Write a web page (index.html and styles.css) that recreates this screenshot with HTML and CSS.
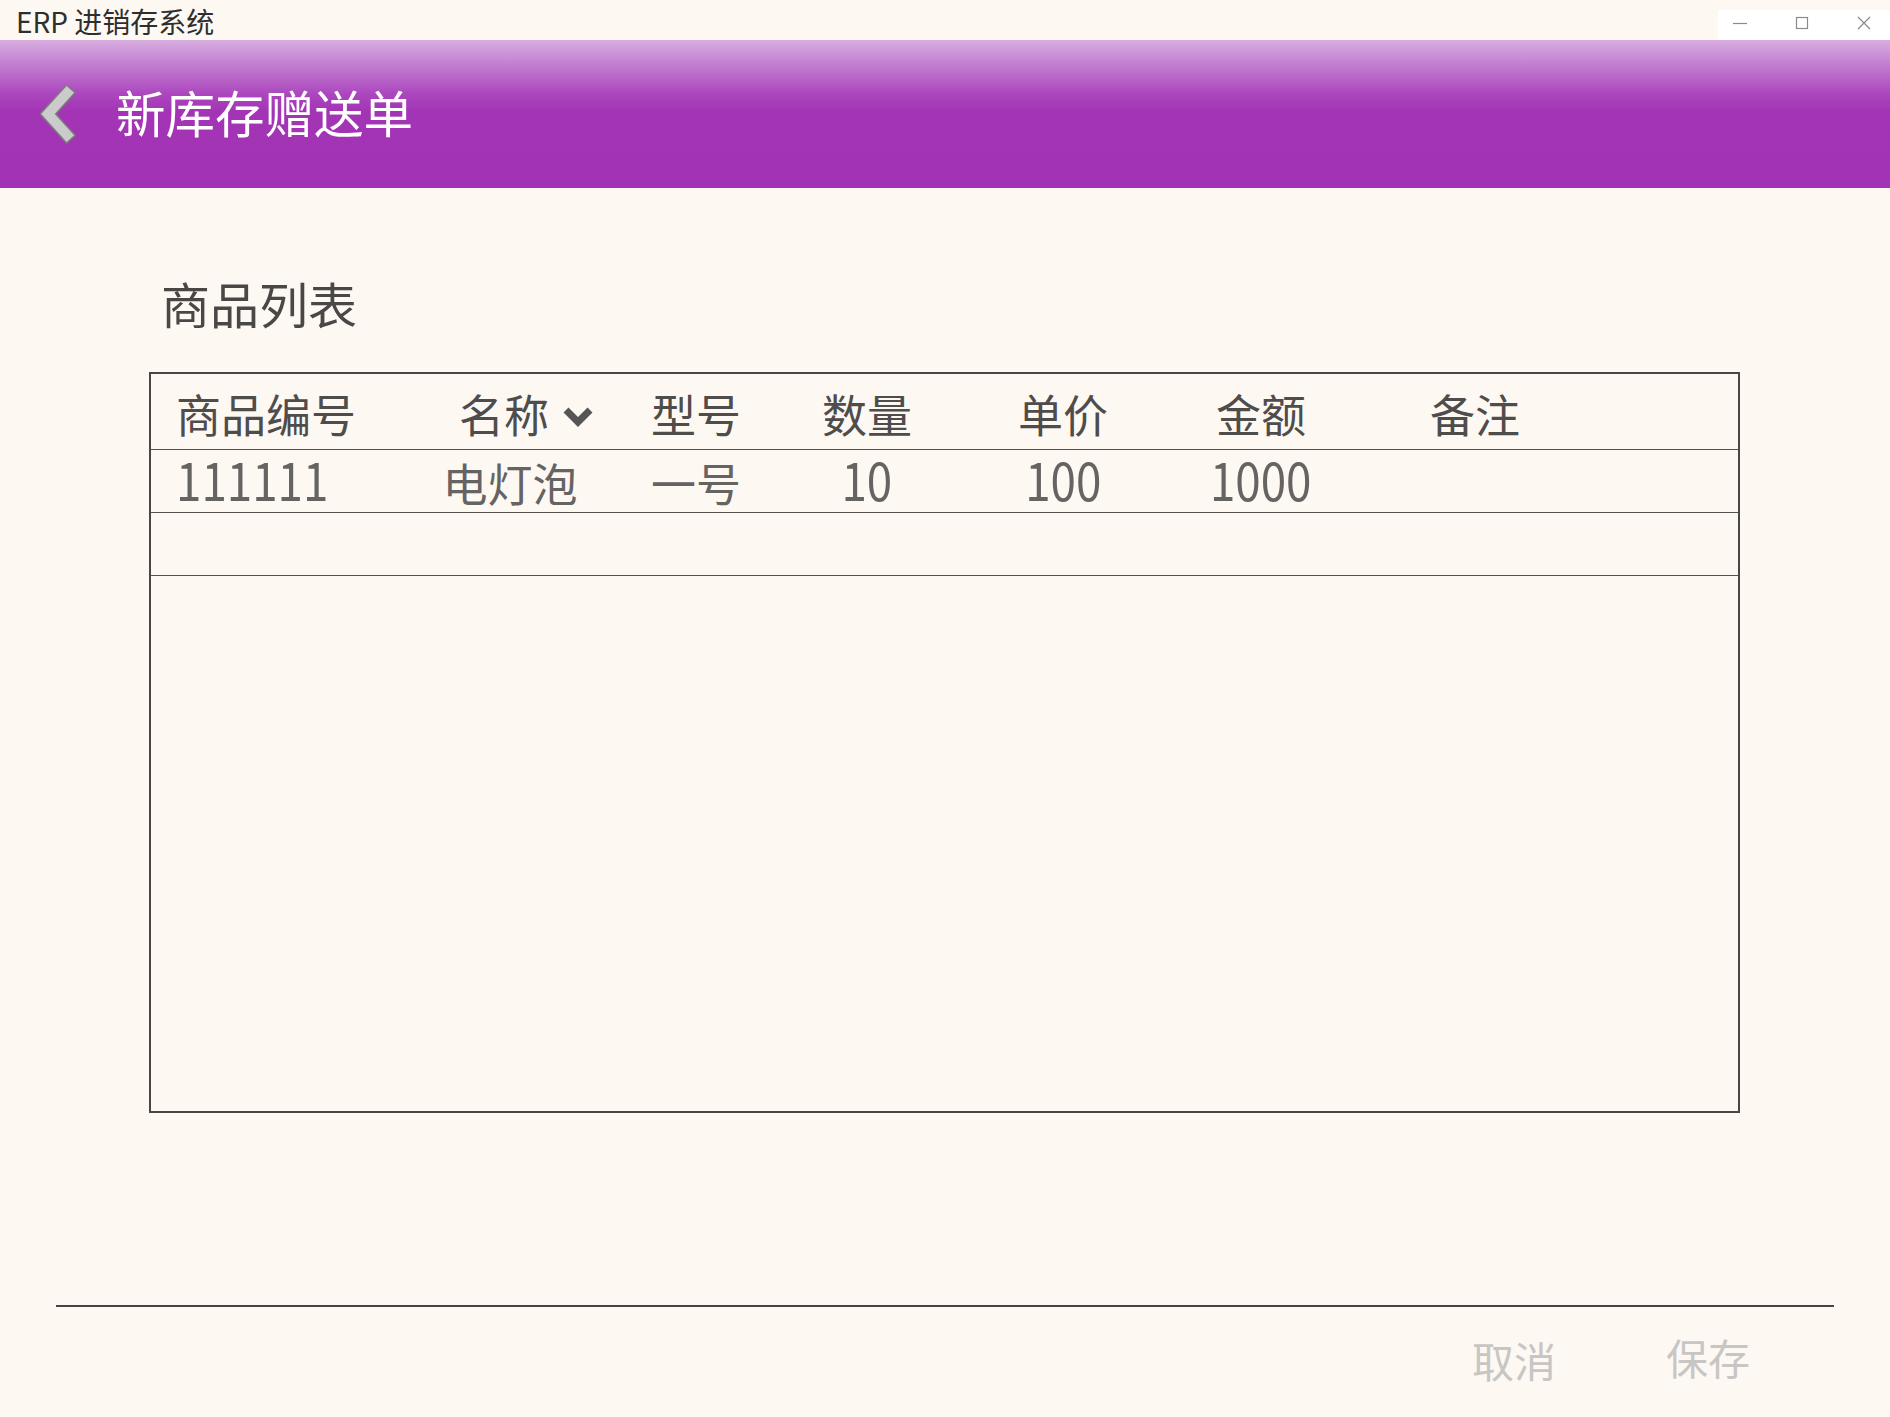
FILE: index.html
```html
<!DOCTYPE html>
<html lang="zh-CN">
<head>
<meta charset="utf-8">
<title>ERP 进销存系统</title>
<link rel="stylesheet" href="styles.css">
</head>
<body>
<div class="window">
  <div class="titlebar">
    <span class="app-title">ERP 进销存系统</span>
    <div class="win-controls">
      <svg class="wc" width="40" height="29" viewBox="0 0 40 29"><line x1="13" y1="12.5" x2="27" y2="12.5" stroke="#8a8a8a" stroke-width="1.2"/></svg>
      <svg class="wc" width="40" height="29" viewBox="0 0 40 29"><rect x="14.5" y="6.5" width="11" height="11" fill="none" stroke="#8a8a8a" stroke-width="1.2"/></svg>
      <svg class="wc" width="40" height="29" viewBox="0 0 40 29"><path d="M14 6 L26 18 M26 6 L14 18" stroke="#8a8a8a" stroke-width="1.2" fill="none"/></svg>
    </div>
  </div>

  <header class="page-header">
    <svg class="back" width="40" height="60" viewBox="0 0 40 60">
      <polyline points="31,8 12,29 31,50" fill="none" stroke="#7c7c7c" stroke-width="13" stroke-linejoin="miter" stroke-linecap="square"/>
      <polyline points="31,8 12,29 31,50" fill="none" stroke="#cbcbcb" stroke-width="10" stroke-linejoin="miter" stroke-linecap="square"/>
    </svg>
    <h1 class="page-title">新库存赠送单</h1>
  </header>

  <main class="content">
    <h2 class="section-title">商品列表</h2>
    <div class="grid-table">
      <div class="row head">
        <div class="cell first">商品编号</div>
        <div class="cell name-head">名称<svg class="sort" width="34" height="24" viewBox="0 0 34 24"><polyline points="5,5 17,17 29,5" fill="none" stroke="#555" stroke-width="7"/></svg></div>
        <div class="cell">型号</div>
        <div class="cell">数量</div>
        <div class="cell">单价</div>
        <div class="cell">金额</div>
        <div class="cell">备注</div>
        <div class="cell"></div>
      </div>
      <div class="row body">
        <div class="cell first"><span class="num left">111111</span></div>
        <div class="cell name-cell">电灯泡</div>
        <div class="cell">一号</div>
        <div class="cell"><span class="num">10</span></div>
        <div class="cell"><span class="num">100</span></div>
        <div class="cell"><span class="num">1000</span></div>
        <div class="cell"></div>
        <div class="cell"></div>
      </div>
      <div class="row body">
        <div class="cell first"></div>
        <div class="cell"></div>
        <div class="cell"></div>
        <div class="cell"></div>
        <div class="cell"></div>
        <div class="cell"></div>
        <div class="cell"></div>
        <div class="cell"></div>
      </div>
    </div>
  </main>

  <footer class="footer">
    <button class="btn cancel">取消</button>
    <button class="btn">保存</button>
  </footer>
</div>
</body>
</html>
```
FILE: styles.css
```css
* { box-sizing: border-box; }

html, body {
  margin: 0;
  padding: 0;
  background: #fdf8f2;
}

body {
  font-family: "Noto Sans CJK SC", "Noto Sans", sans-serif;
  color: #4a4a4a;
}

.window {
  width: 1890px;
  height: 1417px;
  display: flex;
  flex-direction: column;
}

.titlebar {
  height: 40px;
  display: flex;
  align-items: flex-start;
  justify-content: space-between;
  background: #fdf8f2;
}

.app-title {
  font-size: 28px;
  line-height: 40px;
  color: #2e2e2e;
  padding-left: 16px;
  margin-top: 1px;
}

.win-controls {
  margin-top: 10px;
  width: 172px;
  height: 30px;
  background: #ffffff;
  display: flex;
  align-items: center;
  gap: 22px;
  padding-left: 2px;
}

.wc { display: block; }

.page-header {
  height: 148px;
  display: flex;
  align-items: center;
  padding-left: 36px;
  background: linear-gradient(to bottom, #d8aee0 0px, #c27dd0 25px, #ab45bd 55px, #a334b5 72px, #a233b4 148px);
}

.back {
  display: block;
  margin-top: 2px;
}

.page-title {
  margin: -4px 0 0 40px;
  font-weight: normal;
  font-size: 49.5px;
  line-height: 60px;
  color: #ffffff;
}

.content {
  padding-left: 149px;
}

.section-title {
  margin: 85px 0 0 12px;
  font-weight: normal;
  font-size: 49px;
  line-height: 60px;
  color: #4a4747;
}

.grid-table {
  margin-top: 39px;
  width: 1591px;
  height: 741px;
  border: 2px solid #4a4646;
}

.row {
  display: grid;
  grid-template-columns: 279px 180px 172px 170px 222px 174px 254px 1fr;
  border-bottom: 1px solid #555151;
}

.row.head { height: 76px; }
.row.body { height: 63px; }

.cell {
  display: flex;
  align-items: center;
  justify-content: center;
  font-size: 45px;
  color: #4f4c4c;
}

.row.head .cell { padding-top: 4px; }

.row.body .cell {
  color: #666363;
  align-items: flex-start;
  line-height: 1;
  padding-top: 10px;
}

.cell.first {
  justify-content: flex-start;
  padding-left: 25px;
}

.name-head { padding-left: 14px; }
.name-cell { padding-right: 20px; }

.num {
  display: inline-block;
  font-size: 52px;
  line-height: 1;
  margin-top: -7px;
  transform: scaleX(0.88);
}

.num.left {
  transform-origin: left center;
}

.sort {
  display: block;
  margin-left: 12px;
  margin-top: 6px;
}

.footer {
  margin: 192px 56px 0 56px;
  border-top: 2px solid #4a4545;
  display: flex;
  justify-content: flex-end;
  align-items: flex-start;
  gap: 110px;
  padding-right: 84px;
  padding-top: 20px;
}

.btn {
  background: none;
  border: none;
  padding: 0;
  font-family: "Noto Sans CJK SC", "Noto Sans", sans-serif;
  font-size: 42px;
  color: #c8c6c4;
  line-height: 60px;
}

.btn.cancel { margin-top: 3px; }
```
